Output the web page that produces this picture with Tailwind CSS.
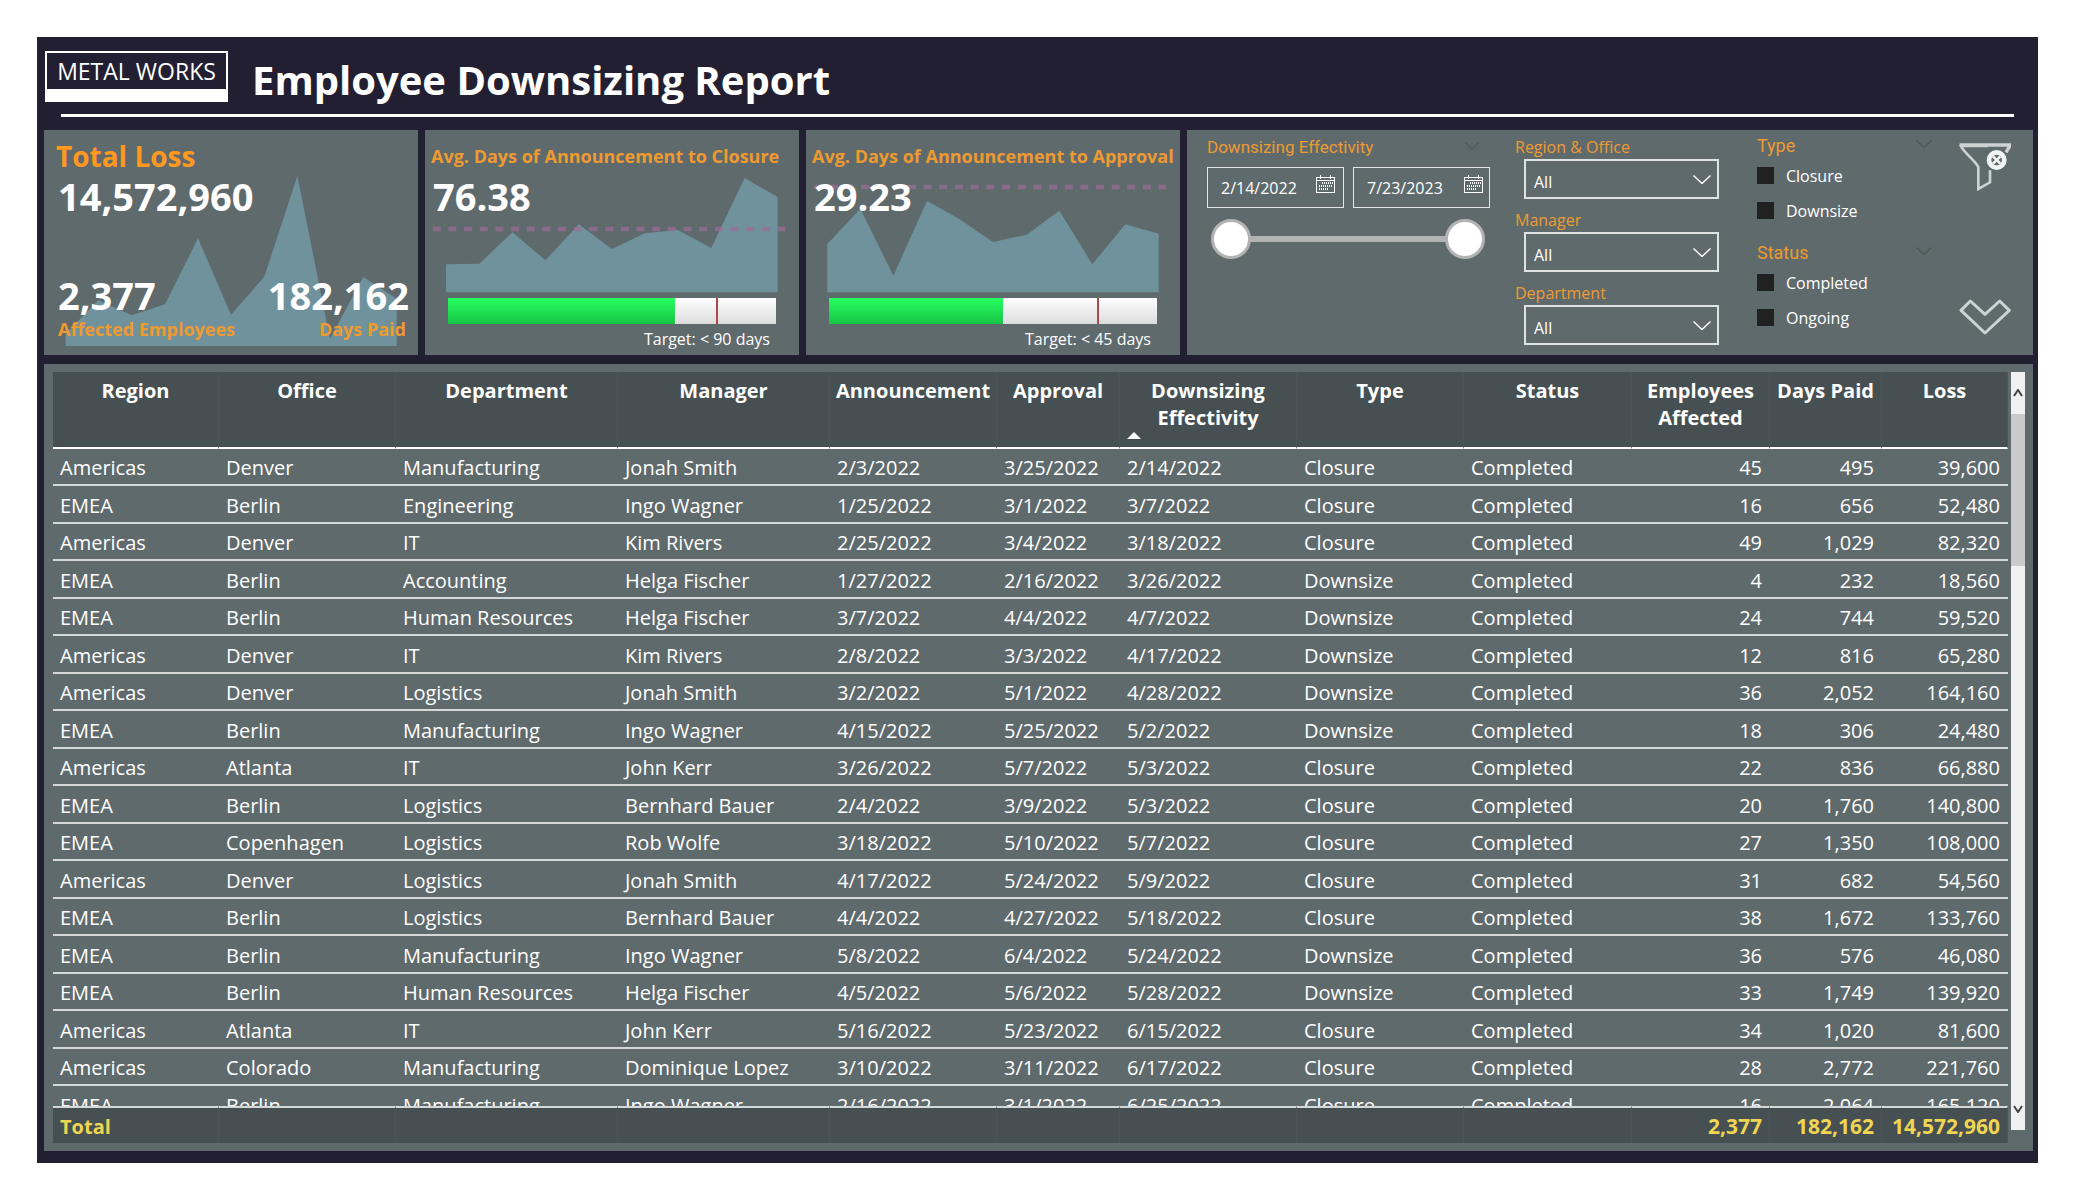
<!DOCTYPE html>
<html lang="en">
<head>
<meta charset="utf-8">
<title>Employee Downsizing Report</title>
<script src="https://cdn.jsdelivr.net/npm/@tailwindcss/browser@4"></script>
</head>
<body class="bg-white font-['Open_Sans',sans-serif] text-white">
<div class="h-screen min-h-[800px] p-[37px]">
<div class="flex h-full flex-col bg-[#211f31] pr-[5px] pb-3 pl-[7px]">

  <header class="flex h-[93px] shrink-0 flex-col pr-[19px] pt-[14px]">
    <div class="flex items-start">
      <div class="ml-px h-[51px] w-[183px] border-2 border-b-[13px] border-white text-center text-[23px] leading-9 whitespace-nowrap">METAL WORKS</div>
      <h1 class="ml-6 text-[40px] leading-[58px] font-bold whitespace-nowrap">Employee Downsizing Report</h1>
    </div>
    <div class="ml-[17px] mt-[5px] h-[3px] bg-white"></div>
  </header>

  <main class="flex min-h-0 flex-1 flex-col gap-[9px]">
    <div class="grid h-[225px] shrink-0 grid-cols-[374fr_374fr_374fr_846fr] gap-[7px]">

      <section class="relative bg-[#5f6a6d]">
        <svg class="absolute inset-0 size-full" viewBox="22 29 1122 675" preserveAspectRatio="none"><path fill="#6f929d" d="M87 640L185 540L285 585L385 552L484 354L583 583L683 469L782 167L880 655L980 470L1080 535V677H87Z"/></svg>
        <div class="relative flex h-full flex-col px-3 pt-2 pb-[14px]">
          <h2 class="text-[28px] leading-9 font-bold text-[#ff981f]">Total Loss</h2>
          <p class="pl-[2px] text-[38px] leading-[44px] font-bold">14,572,960</p>
          <div class="mt-auto -mr-[3px] flex justify-between">
            <div><p class="pl-[2px] text-[38px] leading-[44px] font-bold">2,377</p><p class="pl-[2px] text-lg leading-6 font-bold text-[#ee9a30]">Affected Employees</p></div>
            <div class="text-right"><p class="text-[38px] leading-[44px] font-bold">182,162</p><p class="pr-[3px] text-lg leading-6 font-bold text-[#ee9a30]">Days Paid</p></div>
          </div>
        </div>
      </section>

      <section class="relative bg-[#5f6a6d]">
        <svg class="absolute inset-0 size-full" viewBox="15 29 1121 675" preserveAspectRatio="none"><path fill="#6f929d" d="M78 432L178 430L277 336L376 420L476 312L575 386L674 339L773 329L873 383L973 173L1072 230V516H78Z"/><path stroke="#9c6c97" stroke-opacity=".7" stroke-width="13" stroke-dasharray="24 23" d="M38 326H1095"/></svg>
        <div class="relative flex h-full flex-col">
          <h2 class="mt-[10px] pl-[6px] text-lg leading-8 font-bold whitespace-nowrap text-[#ee9a30]">Avg. Days of Announcement to Closure</h2>
          <p class="mt-[2px] pl-2 text-[38px] leading-[44px] font-bold">76.38</p>
          <div class="mx-[23px] mt-auto">
            <div class="relative h-[26px] bg-linear-to-b from-white to-[#dcdcdc]"><div class="h-full border-r border-white bg-linear-to-b from-[#24ff60] to-[#18c545]" style="width:69.5%"></div><div class="absolute inset-y-0 w-[2px] bg-[#b0474a]" style="left:81.6%"></div></div>
            <p class="pt-1 pr-[6px] pb-[5px] text-right text-base leading-[22px]">Target: &lt; 90 days</p>
          </div>
        </div>
      </section>

      <section class="relative bg-[#5f6a6d]">
        <svg class="absolute inset-0 size-full" viewBox="18 29 1122 675" preserveAspectRatio="none"><path fill="#6f929d" d="M82 371L181 265L280 466L381 242L478 296L579 365L680 343L778 271L877 432L976 312L1076 340V516H82Z"/><path stroke="#9c6c97" stroke-opacity=".7" stroke-width="13" stroke-dasharray="24 23" d="M42 200H1098"/></svg>
        <div class="relative flex h-full flex-col">
          <h2 class="mt-[10px] pl-[6px] text-lg leading-8 font-bold whitespace-nowrap text-[#ee9a30]">Avg. Days of Announcement to Approval</h2>
          <p class="mt-[2px] pl-2 text-[38px] leading-[44px] font-bold">29.23</p>
          <div class="mx-[23px] mt-auto">
            <div class="relative h-[26px] bg-linear-to-b from-white to-[#dcdcdc]"><div class="h-full border-r border-white bg-linear-to-b from-[#24ff60] to-[#18c545]" style="width:53.3%"></div><div class="absolute inset-y-0 w-[2px] bg-[#b0474a]" style="left:81.6%"></div></div>
            <p class="pt-1 pr-[6px] pb-[5px] text-right text-base leading-[22px]">Target: &lt; 45 days</p>
          </div>
        </div>
      </section>

      <section class="flex bg-[#5f6a6d] pr-[22px] pl-5">
        <fieldset class="w-[283px] pt-[6px]">
          <div class="flex h-6 items-center justify-between pr-[11px]">
            <legend class="font-[Roboto,sans-serif] text-[17px] text-[#ee9a30]">Downsizing Effectivity</legend>
            <svg class="mb-1 h-2 w-3.5" viewBox="0 0 14 8" fill="none" stroke="#505556" stroke-width="1.3"><path d="M.5 .5L7 7L13.5 .5"/></svg>
          </div>
          <div class="mt-[7px] grid grid-cols-2 gap-[9px]">
            <label class="flex h-[41px] items-center justify-between border border-[#e4e7e7] pr-2 pl-[13px]"><input aria-label="Start date" class="w-20 text-base outline-none" value="2/14/2022">
              <svg class="mb-2 h-[18px] w-[19px]" viewBox="0 0 19 18" fill="none" stroke="#fff" shape-rendering="crispEdges"><path d="M.5 2.5H18.5V17.5H.5ZM0 5.5H19M4.5 0V4M14.5 0V4"/><path stroke-dasharray="1 1" stroke-width="2" d="M6 8H17M3 11H17M3 14H13"/></svg></label>
            <label class="flex h-[41px] items-center justify-between border border-[#e4e7e7] pr-[6px] pl-[13px]"><input aria-label="End date" class="w-20 text-base outline-none" value="7/23/2023">
              <svg class="mb-2 h-[18px] w-[19px]" viewBox="0 0 19 18" fill="none" stroke="#fff" shape-rendering="crispEdges"><path d="M.5 2.5H18.5V17.5H.5ZM0 5.5H19M4.5 0V4M14.5 0V4"/><path stroke-dasharray="1 1" stroke-width="2" d="M6 8H17M3 11H17M3 14H13"/></svg></label>
          </div>
          <div class="relative mr-[5px] ml-1 mt-[11px] flex h-10 items-center">
            <div class="mx-5 h-[6px] flex-1 bg-[#b3b3b3]"></div>
            <input type="range" aria-label="Earliest date" min="0" max="100" value="0" class="pointer-events-none absolute inset-0 h-10 w-full appearance-none bg-transparent [&::-webkit-slider-thumb]:pointer-events-auto [&::-webkit-slider-thumb]:size-10 [&::-webkit-slider-thumb]:appearance-none [&::-webkit-slider-thumb]:rounded-full [&::-webkit-slider-thumb]:border-3 [&::-webkit-slider-thumb]:border-[#b3b3b3] [&::-webkit-slider-thumb]:bg-white">
            <input type="range" aria-label="Latest date" min="0" max="100" value="100" class="pointer-events-none absolute inset-0 h-10 w-full appearance-none bg-transparent [&::-webkit-slider-thumb]:pointer-events-auto [&::-webkit-slider-thumb]:size-10 [&::-webkit-slider-thumb]:appearance-none [&::-webkit-slider-thumb]:rounded-full [&::-webkit-slider-thumb]:border-3 [&::-webkit-slider-thumb]:border-[#b3b3b3] [&::-webkit-slider-thumb]:bg-white">
          </div>
        </fieldset>

        <div class="ml-[25px] flex w-[204px] flex-col gap-[9px] pt-[5px]">
          <div><label for="region" class="block text-base leading-6 text-[#ee9a30]">Region &amp; Office</label>
            <div class="relative ml-[9px]"><select id="region" class="h-10 w-full appearance-none border-2 border-[#dfe2e2] px-2 pt-[6px] text-base"><option>All</option></select><svg class="pointer-events-none absolute top-4 right-2 h-[9px] w-[18px]" viewBox="0 0 18 9" fill="none" stroke="#fff" stroke-width="1.4"><path d="M.5 .5L9 8.5L17.5 .5"/></svg></div></div>
          <div><label for="manager" class="block text-base leading-6 text-[#ee9a30]">Manager</label>
            <div class="relative ml-[9px]"><select id="manager" class="h-10 w-full appearance-none border-2 border-[#dfe2e2] px-2 pt-[6px] text-base"><option>All</option></select><svg class="pointer-events-none absolute top-4 right-2 h-[9px] w-[18px]" viewBox="0 0 18 9" fill="none" stroke="#fff" stroke-width="1.4"><path d="M.5 .5L9 8.5L17.5 .5"/></svg></div></div>
          <div><label for="department" class="block text-base leading-6 text-[#ee9a30]">Department</label>
            <div class="relative ml-[9px]"><select id="department" class="h-10 w-full appearance-none border-2 border-[#dfe2e2] px-2 pt-[6px] text-base"><option>All</option></select><svg class="pointer-events-none absolute top-4 right-2 h-[9px] w-[18px]" viewBox="0 0 18 9" fill="none" stroke="#fff" stroke-width="1.4"><path d="M.5 .5L9 8.5L17.5 .5"/></svg></div></div>
        </div>

        <div class="mr-[27px] ml-auto flex w-[175px] flex-col gap-[13px] pt-1">
          <div>
            <div class="flex h-6 items-center justify-between"><h3 class="font-[Roboto,sans-serif] text-lg text-[#ee9a30]">Type</h3><svg class="mb-1 h-2 w-4" viewBox="0 0 16 8" fill="none" stroke="#505556" stroke-width="1.3"><path d="M.5 .5L8 7.5L15.5 .5"/></svg></div>
            <label class="flex h-[35px] items-center gap-3 text-base"><input type="checkbox" class="size-[17px] appearance-none bg-[#212121] checked:bg-[#ee9a30]">Closure</label>
            <label class="flex h-[35px] items-center gap-3 text-base"><input type="checkbox" class="size-[17px] appearance-none bg-[#212121] checked:bg-[#ee9a30]">Downsize</label>
          </div>
          <div>
            <div class="flex h-6 items-center justify-between"><h3 class="font-[Roboto,sans-serif] text-lg text-[#ee9a30]">Status</h3><svg class="mb-1 h-2 w-4" viewBox="0 0 16 8" fill="none" stroke="#505556" stroke-width="1.3"><path d="M.5 .5L8 7.5L15.5 .5"/></svg></div>
            <label class="flex h-[35px] items-center gap-3 text-base"><input type="checkbox" class="size-[17px] appearance-none bg-[#212121] checked:bg-[#ee9a30]">Completed</label>
            <label class="flex h-[35px] items-center gap-3 text-base"><input type="checkbox" class="size-[17px] appearance-none bg-[#212121] checked:bg-[#ee9a30]">Ongoing</label>
          </div>
        </div>

        <div class="flex flex-col justify-between pt-[13px] pb-5">
          <button aria-label="Clear all filters"><svg class="h-12 w-[52px]" viewBox="655 70 156 144" fill="none" stroke="#cdd2d3" stroke-width="8"><path d="M742 79H661C670 100 700 118 713 142V208L748 188V152"/><path d="M657 76H809L796 98" stroke-width="10"/><circle cx="768" cy="121" r="23" stroke="#f2f4f4" stroke-width="14"/><path stroke="#f2f4f4" d="M757 110L779 132M779 110L757 132"/></svg></button>
          <button aria-label="Show more"><svg class="h-[36px] w-[52px]" viewBox="655 537 156 108" fill="none" stroke="#cdd2d3" stroke-width="9" stroke-linejoin="round"><path d="M661 571L689 543L733 583L777 543L806 571L733 639Z"/></svg></button>
        </div>
      </section>
    </div>

    <section class="flex min-h-0 flex-1 bg-[#5f6a6d] pt-2 pr-2 pb-2 pl-[9px]">
      <div class="min-w-0 flex-1 overflow-hidden">
        <table class="w-full table-fixed border-separate border-spacing-0 text-xl leading-[27px] whitespace-nowrap">
          <colgroup><col class="w-[166px]"><col class="w-[177px]"><col class="w-[222px]"><col class="w-[212px]"><col class="w-[167px]"><col class="w-[123px]"><col class="w-[177px]"><col class="w-[167px]"><col class="w-[168px]"><col class="w-[138px]"><col class="w-[112px]"><col class="w-[126px]"></colgroup>
          <thead id="head" class="sticky top-0 z-10 align-top"></thead>
          <tbody id="body"></tbody>
          <tfoot id="foot" class="sticky bottom-0 z-10"></tfoot>
        </table>
      </div>
      <div class="mb-[13px] ml-[3px] flex w-[14px] flex-col bg-[#f0f0f0]">
        <button aria-label="Scroll up" class="flex h-[42px] items-center justify-center"><svg class="h-2 w-2.5" viewBox="0 0 10 8" fill="none" stroke="#444" stroke-width="2"><path d="M1 7L5 1L9 7"/></svg></button>
        <div class="h-[152px] bg-[#cacaca]"></div>
        <button aria-label="Scroll down" class="mt-auto flex h-[42px] items-center justify-center"><svg class="h-2 w-2.5" viewBox="0 0 10 8" fill="none" stroke="#444" stroke-width="2"><path d="M1 1L5 7L9 1"/></svg></button>
      </div>
    </section>
  </main>
</div>
</div>
<script>
const heads = ['Region','Office','Department','Manager','Announcement','Approval','Downsizing<br>Effectivity','Type','Status','Employees<br>Affected','Days Paid','Loss'];
const rows = `Americas|Denver|Manufacturing|Jonah Smith|2/3/2022|3/25/2022|2/14/2022|Closure|Completed|45|495|39,600
EMEA|Berlin|Engineering|Ingo Wagner|1/25/2022|3/1/2022|3/7/2022|Closure|Completed|16|656|52,480
Americas|Denver|IT|Kim Rivers|2/25/2022|3/4/2022|3/18/2022|Closure|Completed|49|1,029|82,320
EMEA|Berlin|Accounting|Helga Fischer|1/27/2022|2/16/2022|3/26/2022|Downsize|Completed|4|232|18,560
EMEA|Berlin|Human Resources|Helga Fischer|3/7/2022|4/4/2022|4/7/2022|Downsize|Completed|24|744|59,520
Americas|Denver|IT|Kim Rivers|2/8/2022|3/3/2022|4/17/2022|Downsize|Completed|12|816|65,280
Americas|Denver|Logistics|Jonah Smith|3/2/2022|5/1/2022|4/28/2022|Downsize|Completed|36|2,052|164,160
EMEA|Berlin|Manufacturing|Ingo Wagner|4/15/2022|5/25/2022|5/2/2022|Downsize|Completed|18|306|24,480
Americas|Atlanta|IT|John Kerr|3/26/2022|5/7/2022|5/3/2022|Closure|Completed|22|836|66,880
EMEA|Berlin|Logistics|Bernhard Bauer|2/4/2022|3/9/2022|5/3/2022|Closure|Completed|20|1,760|140,800
EMEA|Copenhagen|Logistics|Rob Wolfe|3/18/2022|5/10/2022|5/7/2022|Closure|Completed|27|1,350|108,000
Americas|Denver|Logistics|Jonah Smith|4/17/2022|5/24/2022|5/9/2022|Closure|Completed|31|682|54,560
EMEA|Berlin|Logistics|Bernhard Bauer|4/4/2022|4/27/2022|5/18/2022|Closure|Completed|38|1,672|133,760
EMEA|Berlin|Manufacturing|Ingo Wagner|5/8/2022|6/4/2022|5/24/2022|Downsize|Completed|36|576|46,080
EMEA|Berlin|Human Resources|Helga Fischer|4/5/2022|5/6/2022|5/28/2022|Downsize|Completed|33|1,749|139,920
Americas|Atlanta|IT|John Kerr|5/16/2022|5/23/2022|6/15/2022|Closure|Completed|34|1,020|81,600
Americas|Colorado|Manufacturing|Dominique Lopez|3/10/2022|3/11/2022|6/17/2022|Closure|Completed|28|2,772|221,760
EMEA|Berlin|Manufacturing|Ingo Wagner|2/16/2022|3/1/2022|6/25/2022|Closure|Completed|16|2,064|165,120`.split('\n').map(r => r.split('|'));
const total = ['Total','','','','','','','','','2,377','182,162','14,572,960'];
const sortMark = '<span class="absolute bottom-2 left-[7px] border-x-7 border-b-7 border-transparent border-b-white"></span>';
document.getElementById('head').innerHTML = '<tr>' + heads.map((h, i) =>
  `<th scope="col" class="relative h-[77px] border-r border-b-2 border-r-[#4b5557] border-b-white bg-[#465052] pt-[5px] font-bold">${h}${i === 6 ? sortMark : ''}</th>`).join('') + '</tr>';
document.getElementById('body').innerHTML = rows.map(r => '<tr class="h-[37px] even:h-[38px]">' + r.map((c, i) =>
  `<td class="${i > 8 ? 'border-b-2 border-[#d4d8d8] pt-[2px] pr-2 text-right' : 'border-b-2 border-[#d4d8d8] pt-[2px] pl-[7px]'}">${c}</td>`).join('') + '</tr>').join('');
document.getElementById('foot').innerHTML = '<tr>' + total.map((c, i) =>
  `<td class="${i > 8 ? 'h-[37px] border-t-2 border-r border-t-[#d4d8d8] border-r-[#4b5557] bg-[#465052] pt-[2px] pr-[7px] text-right text-[21px] font-bold text-[#f0d552]' : 'h-[37px] border-t-2 border-r border-t-[#d4d8d8] border-r-[#4b5557] bg-[#465052] pt-[2px] pl-[7px] font-bold text-[#f0d552]'}">${c}</td>`).join('') + '</tr>';
</script>
</body>
</html>
